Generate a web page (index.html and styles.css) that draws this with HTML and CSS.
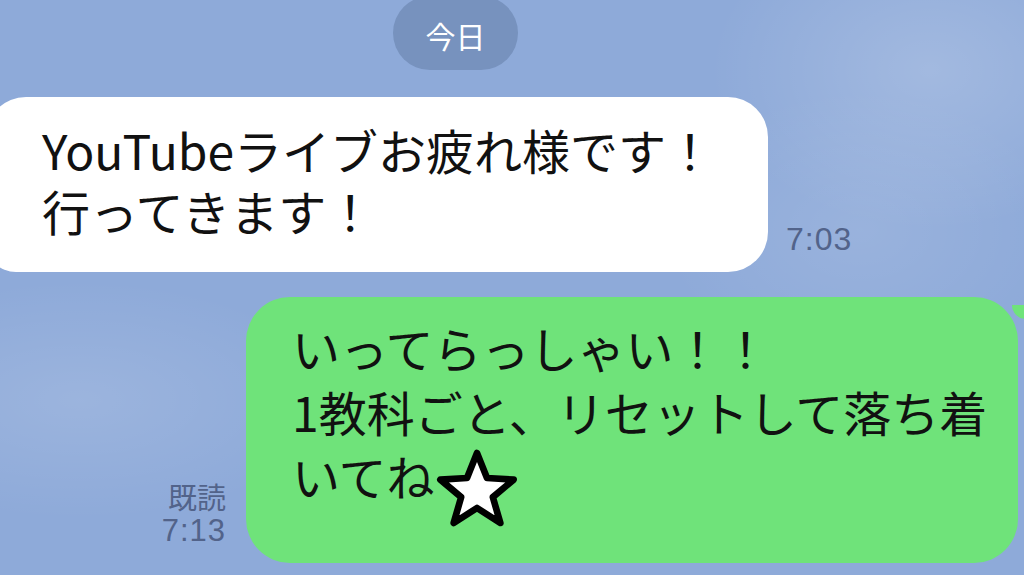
FILE: index.html
```html
<!DOCTYPE html>
<html lang="ja">
<head>
  <meta charset="UTF-8">
  <meta name="viewport" content="width=device-width, initial-scale=1.0">
  <title>トーク</title>
  <link rel="stylesheet" href="styles.css">
</head>
<body>
  <div class="chat">
    <div class="date-row">
      <div class="date-pill">今日</div>
    </div>

    <div class="msg msg-in">
      <div class="bubble bubble-in">YouTubeライブお疲れ様です！<br>行ってきます！</div>
      <div class="meta meta-in">7:03</div>
    </div>

    <div class="msg msg-out">
      <div class="meta meta-out">
        <span class="read">既読</span>
        <span class="time">7:13</span>
      </div>
      <div class="bubble bubble-out">いってらっしゃい！！<br>1教科ごと、リセットして落ち着<br>いてね<svg class="star" viewBox="0 0 100 96" width="84" height="80" aria-hidden="true"><path d="M50 6 L62 36 L94 38 L69 59 L78 90 L50 72 L22 90 L31 59 L6 38 L38 36 Z" fill="#fff" stroke="#000" stroke-width="8" stroke-linejoin="round"/></svg></div>
    </div>
  </div>
</body>
</html>
```

FILE: styles.css
```css
body {
  margin: 0;
  width: 1024px;
  height: 575px;
  overflow: hidden;
  background-color: #8eaad9;
  background-image:
    radial-gradient(ellipse 220px 160px at 930px 70px, rgba(255, 255, 255, 0.18), transparent),
    radial-gradient(ellipse 260px 120px at 80px 400px, rgba(255, 255, 255, 0.12), transparent),
    radial-gradient(ellipse 200px 140px at 860px 230px, rgba(255, 255, 255, 0.1), transparent);
  font-family: "Noto Sans CJK JP", "Noto Sans", sans-serif;
  color: #111;
}

.chat {
  display: flex;
  flex-direction: column;
}

.date-row {
  display: flex;
  padding-left: 393px;
}

.date-pill {
  width: 125px;
  height: 74px;
  margin-top: -4px;
  border-radius: 37px;
  background-color: #7792be;
  color: #fff;
  font-size: 30px;
  display: flex;
  align-items: center;
  justify-content: center;
  padding-top: 3px;
  box-sizing: border-box;
}

.msg {
  display: flex;
  align-items: flex-end;
}

.msg-in {
  margin-top: 27px;
}

.msg-out {
  margin-top: 25px;
  justify-content: flex-end;
}

.bubble {
  position: relative;
  font-size: 48px;
  box-sizing: border-box;
}

.bubble-in {
  width: 782px;
  height: 175px;
  margin-left: -14px;
  padding: 22px 0 0 56px;
  line-height: 61px;
  background-color: #fff;
  border-radius: 40px 40px 40px 30px;
}

.bubble-out {
  width: 772px;
  height: 266px;
  margin-right: 6px;
  padding: 18px 0 0 46px;
  line-height: 64px;
  background-color: #6fe37a;
  border-radius: 44px;
}

.bubble-out::after {
  content: "";
  position: absolute;
  top: 8px;
  right: -10px;
  width: 16px;
  height: 14px;
  background-color: #6fe37a;
  border-bottom-left-radius: 14px;
}

.star {
  position: relative;
  top: 8px;
  vertical-align: -24px;
  margin-top: -20px;
}

.meta {
  color: #52638a;
  font-family: "Liberation Sans", Arial, sans-serif;
}

.meta-in {
  font-size: 32px;
  letter-spacing: 1px;
  margin-left: 18px;
  margin-bottom: 14px;
}

.meta-out {
  display: flex;
  flex-direction: column;
  align-items: flex-end;
  margin-right: 20px;
  margin-bottom: 14px;
}

.read {
  font-family: "Noto Sans CJK JP", sans-serif;
  font-size: 29px;
  line-height: 34px;
}

.time {
  font-size: 31px;
  line-height: 36px;
  letter-spacing: 1px;
}
```
